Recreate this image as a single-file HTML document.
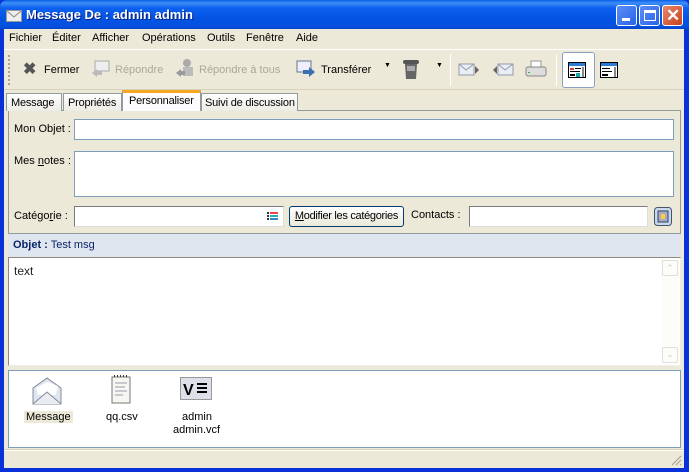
<!DOCTYPE html>
<html><head><meta charset="utf-8"><style>
*{box-sizing:border-box;margin:0;padding:0;white-space:nowrap}
body{width:689px;height:472px;overflow:hidden;font-family:"Liberation Sans",sans-serif;font-size:11px;color:#000;background:#0831d9;position:relative}
.a{position:absolute}
.win{left:4px;top:29px;width:680px;height:439px;background:#ece9d8}
.title{left:0;top:0;width:689px;height:30px;background:linear-gradient(#0a5fe8 0,#3d8ff7 3px,#0e60ef 8px,#0454e4 18px,#0451e0 26px,#0340c8 30px);border-radius:7px 7px 0 0}
.tt{left:26px;top:7px;color:#fff;font-weight:bold;font-size:13px;text-shadow:1px 1px #0a1e7a}
.tb{top:5px;width:21px;height:21px;border:1px solid #fff;border-radius:3px;background:linear-gradient(135deg,#5b8ef7,#2a62e8)}
.inp{background:#fff;border:1px solid #7f9db9}
.lbl{font-size:11px}
.tab{letter-spacing:-0.2px}
</style></head><body>
<div class="a title"></div>
<svg class="a" style="left:6px;top:10px" width="16" height="12"><rect x="0.5" y="0.5" width="15" height="11" fill="#eee" stroke="#999"/><path d="M1 1L8 7L15 1" fill="none" stroke="#888"/></svg>
<div class="a tt">Message De : admin admin</div>
<div class="a tb" style="left:616px"><div class="a" style="left:5px;top:12px;width:8px;height:3px;background:#fff"></div></div>
<div class="a tb" style="left:639px"><div class="a" style="left:4px;top:4px;width:12px;height:11px;border:1px solid #fff;border-top-width:3px"></div></div>
<div class="a tb" style="left:662px;background:linear-gradient(135deg,#e88a6a,#c8401c)"><div class="a" style="left:3px;top:0px;color:#fff;font-size:17px;font-weight:bold;line-height:19px">✕</div></div>
<div class="a win"></div>
<div class="a" style="left:9px;top:32px">Fichier</div>
<div class="a" style="left:52px;top:32px">Éditer</div>
<div class="a" style="left:92px;top:32px">Afficher</div>
<div class="a" style="left:142px;top:32px">Opérations</div>
<div class="a" style="left:207px;top:32px">Outils</div>
<div class="a" style="left:246px;top:32px">Fenêtre</div>
<div class="a" style="left:296px;top:32px">Aide</div>
<div class="a" style="left:4px;top:49px;width:680px;height:1px;background:#fff"></div>
<div class="a" style="left:4px;top:89px;width:680px;height:1px;background:#d8d2bd"></div>
<div class="a" style="left:8px;top:55px;width:2px;height:30px;border-left:2px dotted #a8a594"></div>
<div class="a" style="left:23px;top:63px;font-size:16px;font-weight:bold;color:#555;line-height:14px">✖</div>
<div class="a" style="left:44px;top:64px">Fermer</div>
<svg class="a" style="left:91px;top:60px" width="20" height="20"><rect x="4" y="1" width="14" height="10" fill="#eee" stroke="#aaa"/><path d="M1 13L6 9V11H11V15H6V17Z" fill="#bbb"/></svg>
<div class="a" style="left:115px;top:64px;color:#aca899">Répondre</div>
<svg class="a" style="left:175px;top:58px" width="20" height="22"><circle cx="12" cy="5" r="4" fill="#aaa"/><rect x="8" y="9" width="10" height="9" fill="#bbb"/><path d="M1 15L6 11V13H10V17H6V19Z" fill="#999"/></svg>
<div class="a" style="left:199px;top:64px;color:#aca899">Répondre à tous</div>
<svg class="a" style="left:296px;top:59px" width="20" height="20"><rect x="1" y="2" width="14" height="11" fill="#eef" stroke="#678"/><path d="M7 11H13V8L19 13L13 18V15H7Z" fill="#3a6fb0"/></svg>
<div class="a" style="left:321px;top:64px">Transférer</div>
<div class="a" style="left:384px;top:62px;font-size:7px">▼</div>
<svg class="a" style="left:402px;top:57px" width="18" height="24"><rect x="1" y="3" width="16" height="4" rx="2" fill="#555"/><path d="M3 7H15L14 22H4Z" fill="#666"/><rect x="5" y="9" width="8" height="5" fill="#aaa"/></svg>
<div class="a" style="left:436px;top:62px;font-size:7px">▼</div>
<div class="a" style="left:450px;top:54px;width:1px;height:32px;background:#d0ccb8;border-right:1px solid #fff"></div>
<svg class="a" style="left:458px;top:62px" width="22" height="16"><rect x="1" y="2" width="15" height="11" fill="#e8eef5" stroke="#99a"/><path d="M1 2L8 8L16 2" fill="none" stroke="#99a"/><path d="M17 4L21 8L17 12Z" fill="#666"/></svg>
<svg class="a" style="left:492px;top:62px" width="22" height="16"><rect x="6" y="2" width="15" height="11" fill="#e8eef5" stroke="#99a"/><path d="M6 2L13 8L21 2" fill="none" stroke="#99a"/><path d="M5 4L1 8L5 12Z" fill="#666"/></svg>
<svg class="a" style="left:525px;top:60px" width="22" height="19"><rect x="6" y="1" width="10" height="7" fill="#fff" stroke="#999"/><rect x="1" y="7" width="20" height="9" rx="2" fill="#ddd" stroke="#888"/><rect x="3" y="12" width="2" height="1" fill="#4a4"/></svg>
<div class="a" style="left:556px;top:54px;width:1px;height:32px;background:#d0ccb8;border-right:1px solid #fff"></div>
<div class="a" style="left:562px;top:52px;width:33px;height:36px;border:1px solid #8aa0c0;border-radius:3px;background:#fff"></div>
<svg class="a" style="left:568px;top:62px" width="18" height="16"><rect x="0.5" y="0.5" width="17" height="15" fill="#fff" stroke="#000"/><rect x="1" y="1" width="16" height="3" fill="#2a7cd5"/><rect x="2" y="6" width="4" height="2" fill="#c44"/><rect x="7" y="6" width="6" height="1" fill="#000"/><rect x="2" y="9" width="10" height="1" fill="#000"/><rect x="2" y="12" width="5" height="2" fill="#000"/><rect x="8" y="11" width="4" height="4" fill="#1aa"/><rect x="14" y="5" width="2" height="10" fill="#888"/></svg>
<svg class="a" style="left:600px;top:62px" width="18" height="16"><rect x="0.5" y="0.5" width="17" height="15" fill="#fff" stroke="#000"/><rect x="1" y="1" width="16" height="3" fill="#2a7cd5"/><rect x="2" y="6" width="8" height="1" fill="#000"/><rect x="2" y="9" width="10" height="1" fill="#000"/><rect x="2" y="12" width="6" height="2" fill="#000"/><rect x="14" y="5" width="2" height="10" fill="#888"/></svg>
<div class="a" style="left:8px;top:110px;width:673px;height:124px;border:1px solid #919b9c;background:#ece9d8"></div>
<div class="a tab" style="left:6px;top:93px;width:56px;height:18px;border:1px solid #919b9c;border-bottom:none;background:linear-gradient(#fff,#ecebe5);padding:3px 4px">Message</div>
<div class="a tab" style="left:63px;top:93px;width:59px;height:18px;border:1px solid #919b9c;border-bottom:none;background:linear-gradient(#fff,#ecebe5);padding:3px 4px">Propriétés</div>
<div class="a tab" style="left:122px;top:90px;width:79px;height:21px;border:1px solid #919b9c;border-top:3px solid #f5a623;border-bottom:none;background:#fcfcfe;padding:2px 6px">Personnaliser</div>
<div class="a tab" style="left:201px;top:93px;width:97px;height:18px;border:1px solid #919b9c;border-bottom:none;background:linear-gradient(#fff,#ecebe5);padding:3px 3px;overflow:hidden">Suivi de discussion</div>
<div class="a lbl" style="left:14px;top:123px">Mon Objet :</div>
<div class="a inp" style="left:74px;top:119px;width:600px;height:21px"></div>
<div class="a lbl" style="left:14px;top:155px">Mes <u>n</u>otes :</div>
<div class="a inp" style="left:74px;top:151px;width:600px;height:46px"></div>
<div class="a lbl" style="left:14px;top:210px">Catégo<u>r</u>ie :</div>
<div class="a" style="left:74px;top:206px;width:210px;height:21px;background:#fff;border:1px solid #7a7a7a;border-right-color:#ddd;border-bottom-color:#ddd"></div>
<svg class="a" style="left:267px;top:211px" width="12" height="10"><rect x="0" y="1" width="2" height="2" fill="#333"/><rect x="3" y="1" width="8" height="2" fill="#e44"/><rect x="0" y="4" width="2" height="2" fill="#333"/><rect x="3" y="4" width="8" height="2" fill="#2ab"/><rect x="0" y="7" width="2" height="2" fill="#333"/><rect x="3" y="7" width="8" height="2" fill="#38c"/></svg>
<div class="a" style="left:289px;top:206px;width:115px;height:21px;border:1px solid #003c74;border-radius:3px;background:linear-gradient(#fff,#ece9d8);text-align:center;line-height:19px;letter-spacing:-0.3px"><u>M</u>odifier les catégories</div>
<div class="a lbl" style="left:411px;top:209px">Contacts :</div>
<div class="a" style="left:469px;top:206px;width:179px;height:21px;background:#fff;border:1px solid #7a7a7a;border-right-color:#ddd;border-bottom-color:#ddd"></div>
<svg class="a" style="left:654px;top:207px" width="18" height="19"><rect x="0.5" y="0.5" width="17" height="18" rx="3" fill="#c8d8f0" stroke="#456"/><rect x="4" y="4" width="10" height="11" fill="#aac" stroke="#345"/><rect x="7" y="7" width="4" height="5" fill="#fc3"/></svg>
<div class="a" style="left:8px;top:234px;width:673px;height:23px;background:#dfe6ef"></div>
<div class="a" style="left:13px;top:239px;color:#0a246a"><b>Objet :</b> Test msg</div>
<div class="a" style="left:8px;top:257px;width:673px;height:109px;background:#fff;border:1px solid #8a8a80;border-right-color:#eee;border-bottom-color:#eee"></div>
<div class="a" style="left:14px;top:264px;font-size:12px;color:#222">text</div>
<div class="a" style="left:661px;top:259px;width:18px;height:105px;background:#fcfcf8"></div>
<div class="a" style="left:662px;top:260px;width:16px;height:16px;border:1px solid #e0e0da;border-radius:2px;color:#ccc;font-size:9px;text-align:center;line-height:14px">⌃</div>
<div class="a" style="left:662px;top:347px;width:16px;height:16px;border:1px solid #e0e0da;border-radius:2px;color:#ccc;font-size:9px;text-align:center;line-height:12px">⌄</div>
<div class="a" style="left:8px;top:370px;width:673px;height:78px;background:#fff;border:1px solid #7f9db9"></div>
<svg class="a" style="left:32px;top:375px" width="30" height="30"><path d="M1 13L15 3L29 13V29H1Z" fill="#dde6f0" stroke="#889"/><path d="M4 13L15 7L26 11L24 20L6 20Z" fill="#fff"/><path d="M1 29L15 17L29 29" fill="#e8edf3" stroke="#889"/></svg>
<div class="a" style="left:24px;top:411px;padding:0 2px;background:#ece9d8">Message</div>
<svg class="a" style="left:110px;top:375px" width="22" height="30"><rect x="2" y="2" width="18" height="26" fill="#f6f6f2" stroke="#777"/><path d="M4 1h1M7 1h1M10 1h1M13 1h1M16 1h1" stroke="#333" stroke-width="2"/><path d="M5 8h12M5 12h10M5 16h12M5 20h8" stroke="#99a"/></svg>
<div class="a" style="left:106px;top:411px">qq.csv</div>
<svg class="a" style="left:180px;top:377px" width="32" height="24"><rect x="0.5" y="0.5" width="31" height="22" fill="#dde0e8" stroke="#999"/><text x="3" y="18" font-family="Liberation Sans" font-weight="bold" font-size="16">V</text><path d="M17 7h10M17 11h10M17 15h10" stroke="#000" stroke-width="2"/></svg>
<div class="a" style="left:182px;top:411px">admin</div>
<div class="a" style="left:173px;top:424px">admin.vcf</div>
<div class="a" style="left:4px;top:449px;width:680px;height:1px;background:#d8d2bd"></div>
<div class="a" style="left:4px;top:450px;width:680px;height:1px;background:#fff"></div>
<svg class="a" style="left:670px;top:454px" width="12" height="12"><path d="M11 2L2 11M11 6L6 11M11 10L10 11" stroke="#a09e90"/></svg>
</body></html>
